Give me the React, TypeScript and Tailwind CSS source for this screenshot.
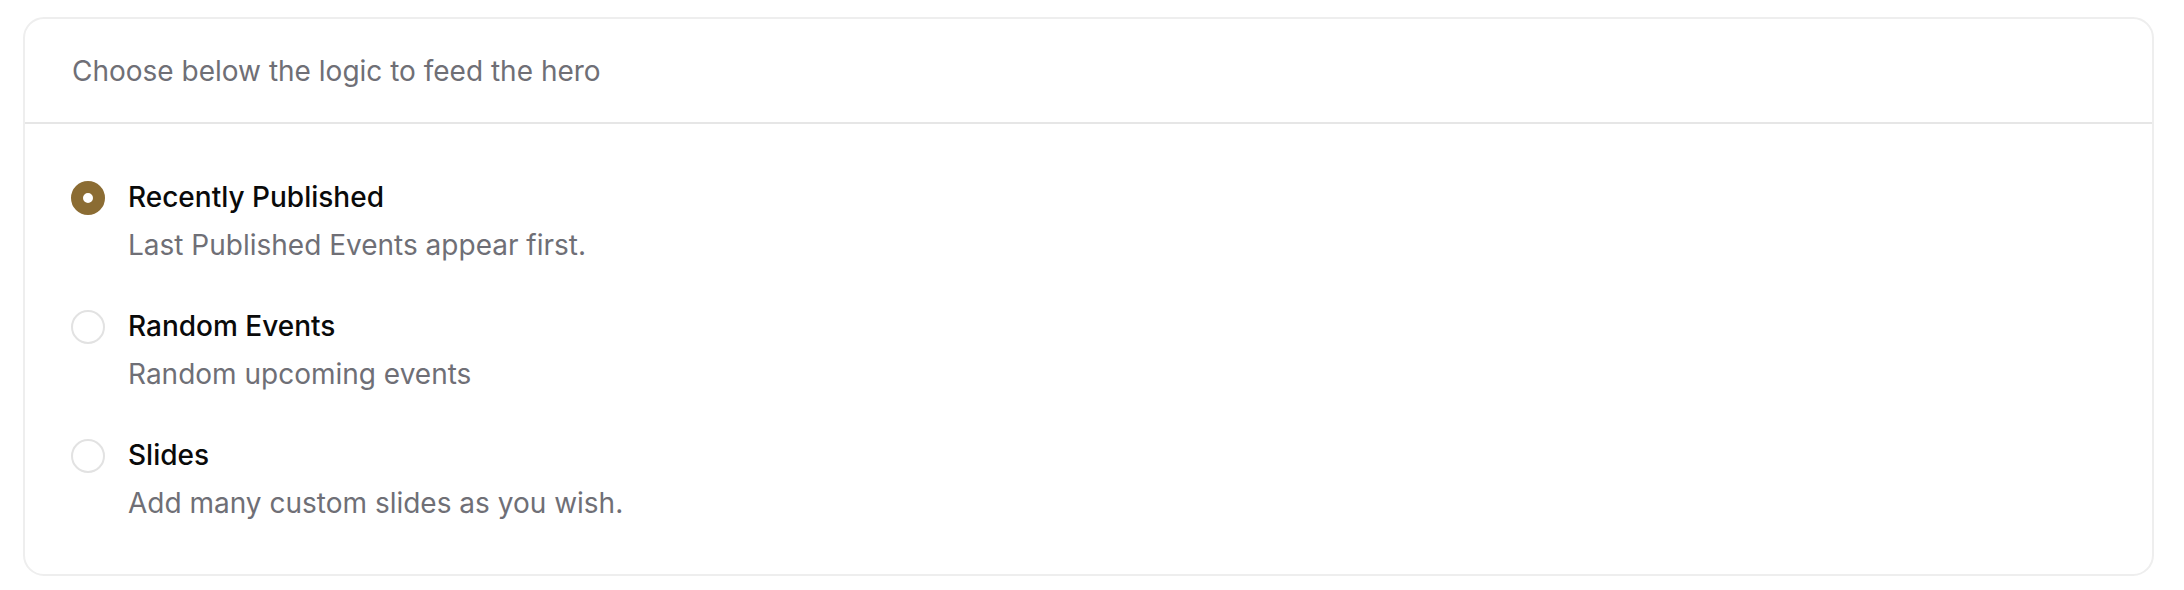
import { useState } from "react";

const options = [
  {
    id: "recent",
    title: "Recently Published",
    description: "Last Published Events appear first.",
  },
  {
    id: "random",
    title: "Random Events",
    description: "Random upcoming events",
  },
  {
    id: "slides",
    title: "Slides",
    description: "Add many custom slides as you wish.",
  },
];

export default function App() {
  const [selected, setSelected] = useState("recent");

  return (
    <div className="min-h-screen bg-white pt-[17px] pl-[23px] font-['Inter',sans-serif]">
      <div className="w-[2131px] rounded-[21px] border-2 border-[#eeeeee] bg-white">
        {/* Header */}
        <div className="border-b-2 border-[#e6e6e6] px-[47px] pt-[36px] pb-[34px]">
          <p className="text-[28px] leading-[33px] text-[#6f6f76]">
            Choose below the logic to feed the hero
          </p>
        </div>

        {/* Options */}
        <div className="flex flex-col gap-[48px] px-[46px] pt-[57px] pb-[54px]">
          {options.map((opt) => {
            const isActive = selected === opt.id;
            return (
              <label
                key={opt.id}
                className="flex cursor-pointer items-start gap-[23px]"
                onClick={() => setSelected(opt.id)}
              >
                <span className="flex h-[33px] items-center">
                  <span
                    className={
                      isActive
                        ? "h-[34px] w-[34px] rounded-full border-[12px] border-[#8b6c33] bg-white"
                        : "h-[34px] w-[34px] rounded-full border-2 border-[#e2e2e2] bg-white"
                    }
                  />
                </span>
                <span className="flex flex-col gap-[15px]">
                  <span className="text-[28px] font-medium leading-[33px] text-[#0a0a0a]">
                    {opt.title}
                  </span>
                  <span className="text-[28px] leading-[33px] text-[#6f6f76]">
                    {opt.description}
                  </span>
                </span>
              </label>
            );
          })}
        </div>
      </div>
    </div>
  );
}
